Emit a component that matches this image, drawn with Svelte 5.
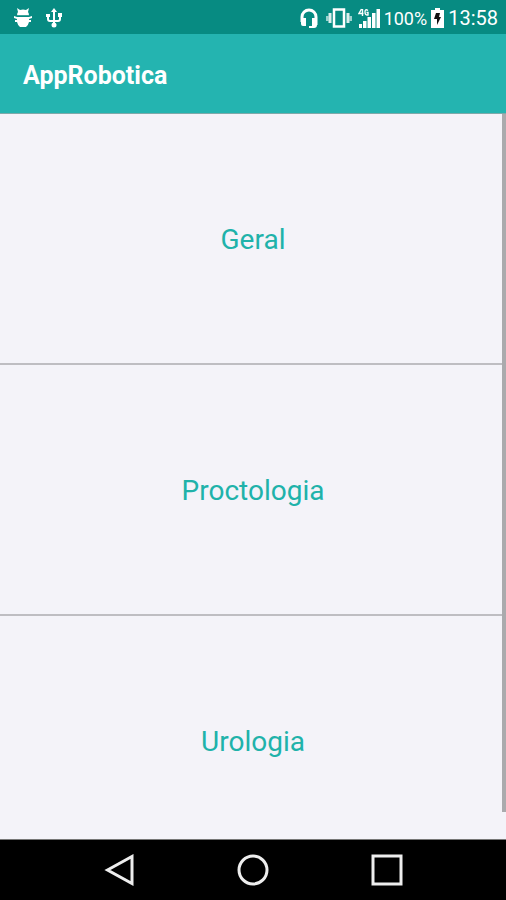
<script>
	let items = [
		{ id: 1, name: 'Geral' },
		{ id: 2, name: 'Proctologia' },
		{ id: 3, name: 'Urologia' },
	];

	let selected = null;
	let viewHeight = 1;
	let contentHeight = 1;
	let scrollTop = 0;

	$: thumbHeight = Math.min(100, (viewHeight / contentHeight) * 100);
	$: thumbTop = (scrollTop / contentHeight) * 100;
</script>

<div class="screen">
	<div class="status">
		<div class="notifications">
			<svg width="20" height="20" viewBox="0 0 20 20" fill="#fff">
				<path d="M4 0l3 2q3-1 6 0l3-2-1 4q1 1 1 4H4q0-3 1-4z" />
				<path d="M1 8l3 1h12l3-1v2l-3 1v1h2v2h-2q-1 4-3 5H7q-2-1-3-5H2v-2h2v-1l-3-1z" />
				<path d="M4 7.500h12" stroke="#078b82" stroke-width=".8" />
			</svg>
			<svg width="18" height="20" viewBox="0 0 18 20" fill="none" stroke="#fff" stroke-width="2">
				<path d="M9 3v14M3 8v3q0 2 2 2h8q2 0 2-2V7" />
				<path d="M9 0l3 4H6zM1 6h4v3H1zM13 5h4v4h-4z" fill="#fff" stroke="none" />
				<circle cx="9" cy="17" r="2.500" fill="#fff" stroke="none" />
			</svg>
		</div>
		<div class="system">
			<svg width="18" height="20" viewBox="0 0 18 20">
				<path d="M2 14V9a7 7 0 0 1 14 0v8" fill="none" stroke="#fff" stroke-width="3" />
				<path d="M1 10h5v8H3q-2 0-2-2zM12 10h5v7q0 3-3 3H9v-2h3z" fill="#fff" />
			</svg>
			<svg class="vibrate" width="26" height="20" viewBox="0 0 26 20">
				<path d="M8 1.500h10v17H8z" fill="none" stroke="#fff" stroke-width="2.500" />
				<path d="M2.500 5h3v10h-3zM20.500 5h3v10h-3z" fill="#fff" opacity=".85" />
				<path d="M0 8h2.500v5H0zM23.500 8H26v5h-2.500z" fill="#fff" opacity=".6" />
			</svg>
			<svg class="signal" width="22" height="20" viewBox="0 0 22 20" fill="#fff">
				<path d="M1 16h3v4H1zM5 13h3.500v7H5zM9.500 9H13v11H9.500zM14 5h3.500v15H14zM18.500 1H22v19h-3.500z" />
				<path d="M3.500 1L1 5.500h4.500M4.500 1v7M10 2.500Q7 .5 7 4t3 3V4.500H8.500" fill="none" stroke="#fff" stroke-width="1.400" />
			</svg>
			<span class="percent">100%</span>
			<svg width="13" height="20" viewBox="0 0 13 20">
				<path d="M4 0h5v2h4v18H0V2h4z" fill="#fff" />
				<path d="M5 5h4L8 9h2l-4 8V11H3z" fill="#111" />
			</svg>
			<span>13:58</span>
		</div>
	</div>

	<header>
		<h1>AppRobotica</h1>
	</header>

	<main bind:clientHeight={viewHeight}>
		<div class="scroller" on:scroll={event => scrollTop = event.target.scrollTop}>
			<ul bind:clientHeight={contentHeight}>
				{#each items as item (item.id)}
					<li>
						<button on:click={() => selected = item}>{item.name}</button>
					</li>
				{/each}
			</ul>
		</div>
		<div class="thumb" style="height: {thumbHeight}%; top: {thumbTop}%"></div>
	</main>

	<nav>
		<button aria-label="Voltar">
			<svg width="32" height="32" viewBox="0 0 32 32">
				<path d="M4.500 16L29 2.500v27z" />
			</svg>
		</button>
		<button aria-label="Início">
			<svg width="32" height="32" viewBox="0 0 32 32">
				<circle cx="16" cy="16" r="14" />
			</svg>
		</button>
		<button aria-label="Recentes">
			<svg width="32" height="32" viewBox="0 0 32 32">
				<path d="M2 2h28v28H2z" />
			</svg>
		</button>
	</nav>
</div>

<style>
	:global(body) {
		margin: 0;
	}

	.screen {
		display: flex;
		flex-direction: column;
		height: 100vh;
		background: #f4f3f9;
		font-family: Roboto, sans-serif;
	}

	.status {
		display: flex;
		justify-content: space-between;
		align-items: center;
		box-sizing: border-box;
		height: 34px;
		padding: 2px 8px 0 13px;
		background: #078b82;
		color: #fff;
		font-size: 20px;
	}

	.notifications {
		display: flex;
		gap: 12px;
	}

	.system {
		display: flex;
		align-items: center;
		gap: 4px;
	}

	.vibrate {
		margin: 0 2px 0 4px;
	}

	.percent {
		font-size: 18px;
	}

	header {
		display: flex;
		align-items: center;
		box-sizing: border-box;
		height: 80px;
		padding: 4px 23px 0;
		background: #24b4b0;
		border-bottom: 1px solid #7fa9aa;
	}

	h1 {
		margin: 0;
		color: #fff;
		font-size: 25px;
		line-height: 32px;
		font-weight: 700;
	}

	main {
		position: relative;
		flex: 1;
		min-height: 0;
	}

	.scroller {
		height: 100%;
		overflow-y: auto;
		scrollbar-width: none;
	}

	ul {
		margin: 0;
		padding: 0;
		list-style: none;
	}

	li {
		border-bottom: 2px solid #bebdc2;
	}

	li button {
		display: block;
		width: 100%;
		height: 249px;
		padding: 2px 0 0;
		border: 0;
		background: transparent;
		color: #20b2aa;
		font-family: inherit;
		font-size: 28px;
		cursor: pointer;
	}

	.thumb {
		position: absolute;
		right: 0;
		width: 4px;
		background: #aaaaad;
	}

	nav {
		display: flex;
		justify-content: center;
		align-items: center;
		gap: 102px;
		height: 60px;
		border-top: 1px solid #777;
		background: #000;
	}

	nav button {
		display: block;
		padding: 0;
		border: 0;
		background: transparent;
		cursor: pointer;
	}

	nav svg {
		display: block;
		fill: none;
		stroke: #eee;
		stroke-width: 3;
	}
</style>
